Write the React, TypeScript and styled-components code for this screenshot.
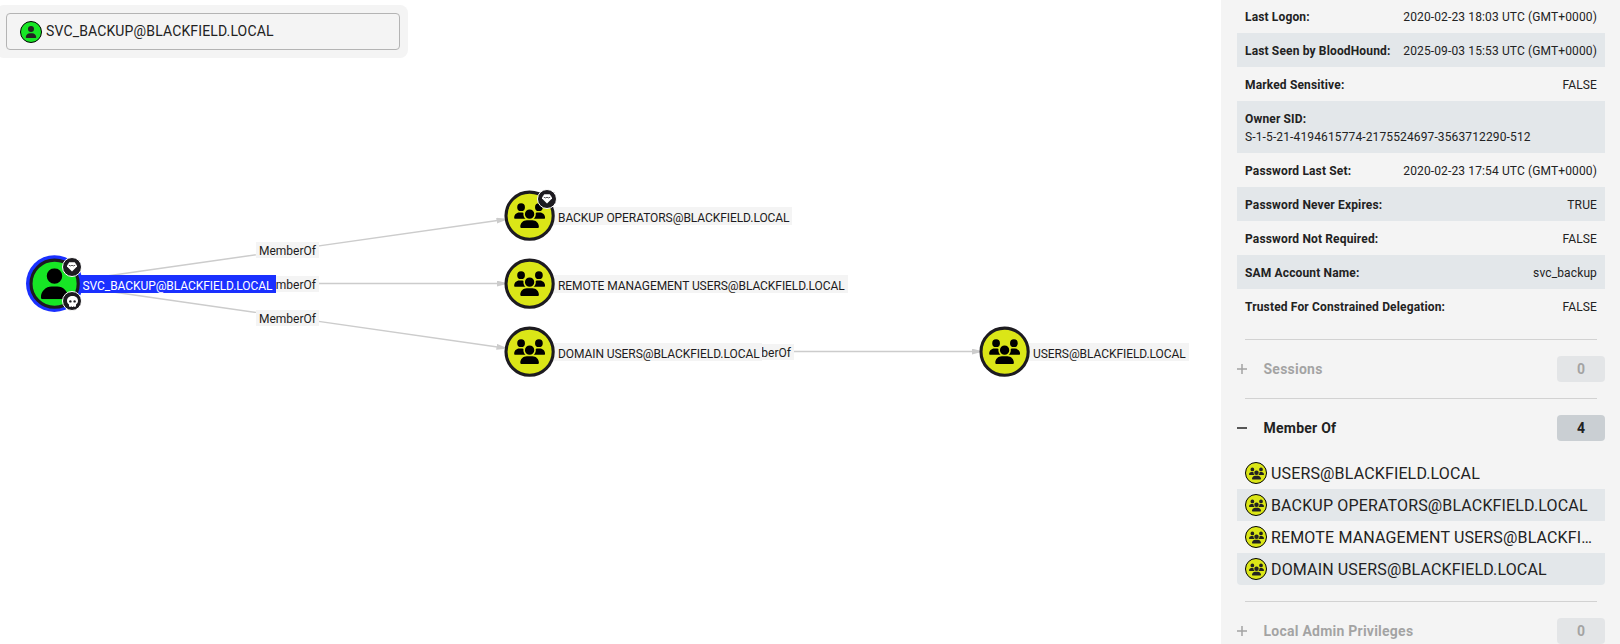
import React from "react";
import styled, { createGlobalStyle } from "styled-components";
import { FaUser, FaUsers } from "react-icons/fa6";

const GlobalStyle = createGlobalStyle`
  * { box-sizing: border-box; }
  body { margin: 0; background: #fff; color: #1d1b20; font-family: Roboto, sans-serif; overflow: hidden; }
`;

const Page = styled.div`
  display: flex;
  width: 1620px;
  height: 644px;
  overflow: hidden;
`;

const Canvas = styled.main`
  position: relative;
  flex: 1;
  min-width: 0;
`;

const Edges = styled.svg`
  position: absolute;
  inset: 0;
`;

const SearchCard = styled.div`
  position: absolute;
  top: 5px;
  left: -4px;
  width: 412px;
  height: 53px;
  padding: 8px 8px 8px 10px;
  border-radius: 8px;
  background: #f4f4f4;
`;

const SearchResult = styled.div`
  display: flex;
  align-items: center;
  gap: 4px;
  height: 37px;
  padding-left: 13px;
  border: 1px solid #b4b4b4;
  border-radius: 4px;
  color: #222;
  font-size: 14px;
  letter-spacing: 0.01em;
`;

const SearchText = styled.span`
  padding-bottom: 2px;
`;

const Glyph = styled.span<{ $fill: string }>`
  display: inline-flex;
  flex: none;
  align-items: center;
  justify-content: center;
  width: 22px;
  height: 22px;
  border: 1px solid #000;
  border-radius: 50%;
  background: ${(p) => p.$fill};
`;

const EdgeLabel = styled.span`
  position: absolute;
  height: 16px;
  padding: 0 3px;
  background: #f4f4f4;
  font-size: 12px;
  line-height: 18px;
  white-space: nowrap;
`;

const NodeLabel = styled.span<{ $selected?: boolean }>`
  position: absolute;
  height: 18px;
  padding: 0 3px 0 7px;
  background: ${(p) => (p.$selected ? "#1a30ff" : "#f4f4f4")};
  color: ${(p) => (p.$selected ? "#fff" : "#1d1b20")};
  font-size: 12px;
  letter-spacing: -0.07px;
  line-height: 22px;
  white-space: nowrap;
`;

const NodeDisc = styled.svg`
  position: absolute;
  width: 60px;
  height: 60px;
  color: #000;
`;

const Badge = styled.span`
  position: absolute;
  display: flex;
  align-items: center;
  justify-content: center;
  width: 20px;
  height: 20px;
  border: 1px solid #fff;
  border-radius: 50%;
  background: #1d1b20;
  color: #fff;
`;

const Panel = styled.aside`
  flex: none;
  width: 399px;
  padding: 0 15px 0 16px;
  background: #f4f4f4;
  color: #222;
`;

const Properties = styled.dl`
  margin: -1px 0 0;
`;

const Property = styled.div<{ $stacked?: boolean }>`
  display: flex;
  flex-direction: ${(p) => (p.$stacked ? "column" : "row")};
  justify-content: space-between;
  padding: 9px 8px 7px;
  font-size: 12px;
  letter-spacing: 0.01071em;
  line-height: 18px;
  white-space: nowrap;
  &:nth-child(even) { background: #e3e7ea; }
  dt { font-weight: 700; letter-spacing: 0.0125em; }
  dd { margin: 0; }
`;

const Divider = styled.hr`
  height: 1px;
  margin: 16px 8px;
  border: 0;
  background: #d2d2d2;
`;

const Section = styled.div<{ $disabled?: boolean }>`
  display: flex;
  align-items: center;
  height: 26px;
  color: #222;
  font-size: 14px;
  font-weight: 700;
  opacity: ${(p) => (p.$disabled ? 0.38 : 1)};
`;

const SectionTitle = styled.span`
  flex: 1;
  margin-left: 16.5px;
  letter-spacing: 0.24px;
`;

const Count = styled.span`
  width: 48px;
  height: 26px;
  border-radius: 4px;
  background: #cacfd3;
  line-height: 26px;
  text-align: center;
`;

const Members = styled.ul`
  margin: 16px 0 0;
  padding: 0;
  list-style: none;
  border-radius: 0 0 4px 4px;
  overflow: hidden;
`;

const Member = styled.li`
  display: flex;
  align-items: center;
  gap: 4px;
  height: 32px;
  padding: 0 8px;
  font-size: 16px;
  letter-spacing: 0.00938em;
  &:nth-child(even) { background: #e3e7ea; }
`;

const MemberName = styled.span`
  overflow: hidden;
  text-overflow: ellipsis;
  white-space: nowrap;
`;

const GREEN = "#17e625";
const YELLOW = "#dbe617";

const nodes = [
  { x: 529, y: 215, name: "BACKUP OPERATORS@BLACKFIELD.LOCAL", width: 241, gem: true },
  { x: 529, y: 283, name: "REMOTE MANAGEMENT USERS@BLACKFIELD.LOCAL", width: 297 },
  { x: 529, y: 351, name: "DOMAIN USERS@BLACKFIELD.LOCAL", width: 211 },
  { x: 1004, y: 351, name: "USERS@BLACKFIELD.LOCAL", width: 163 },
];

const edges = [
  [54, 283.5, 504.5, 219.5],
  [54, 283.5, 504.5, 283.5],
  [54, 283.5, 504.5, 348],
  [529, 351.5, 979.5, 351.5],
];

const edgeLabels = [
  [256, 242],
  [256, 276],
  [256, 310],
  [731, 344],
];

const properties = [
  ["Last Logon:", "2020-02-23 18:03 UTC (GMT+0000)"],
  ["Last Seen by BloodHound:", "2025-09-03 15:53 UTC (GMT+0000)"],
  ["Marked Sensitive:", "FALSE"],
  ["Owner SID:", "S-1-5-21-4194615774-2175524697-3563712290-512"],
  ["Password Last Set:", "2020-02-23 17:54 UTC (GMT+0000)"],
  ["Password Never Expires:", "TRUE"],
  ["Password Not Required:", "FALSE"],
  ["SAM Account Name:", "svc_backup"],
  ["Trusted For Constrained Delegation:", "FALSE"],
];

const members = [
  "USERS@BLACKFIELD.LOCAL",
  "BACKUP OPERATORS@BLACKFIELD.LOCAL",
  "REMOTE MANAGEMENT USERS@BLACKFIELD.LOCAL",
  "DOMAIN USERS@BLACKFIELD.LOCAL",
];

function Disc({ x, y, fill, selected, children }: { x: number; y: number; fill: string; selected?: boolean; children: React.ReactNode }) {
  return (
    <NodeDisc viewBox="0 0 60 60" style={{ left: x - 30, top: y - 30 }}>
      {selected && <circle cx="30.4" cy="30.6" r="28.4" fill="#1a30ff" />}
      <circle cx="30.6" cy="30.7" r="23.6" fill={fill} stroke="#1d1b20" strokeWidth="3.1" />
      {children}
    </NodeDisc>
  );
}

function Gem() {
  return (
    <svg width="10" height="10" viewBox="0 0 10 10">
      <path d="M2.3 0.3h5.4L10 3.4V4.4L5 9.6 0 4.4v-1z" fill="#fff" />
      <path d="M1.8 3.2L3.4 3.9 5 3.3 6.6 3.9 8.2 3.2" fill="none" stroke="#1d1b20" strokeWidth="0.75" />
    </svg>
  );
}

function Skull() {
  return (
    <svg width="11" height="11" viewBox="0 0 11 11">
      <path
        d="M5.5 0C2.4 0 0 2 0 4.7c0 1.6.8 2.9 2 3.7v1.4c0 .7.4 1.2 1 1.2h.8V9.9h.7V11h2V9.9h.7V11H8c.6 0 1-.5 1-1.2V8.4c1.2-.8 2-2.1 2-3.7C11 2 8.6 0 5.5 0z"
        fill="#fff"
      />
      <circle cx="3.4" cy="5.4" r="1.2" fill="#1d1b20" />
      <circle cx="7.6" cy="5.4" r="1.2" fill="#1d1b20" />
    </svg>
  );
}

function Toggle({ open }: { open?: boolean }) {
  return (
    <svg width="10" height="10" viewBox="0 0 10 10" stroke="#222" strokeWidth="1.5">
      <path d={open ? "M0 5h10" : "M0 5h10M5 0v10"} />
    </svg>
  );
}

function SectionHeader({ title, count, open }: { title: string; count: number; open?: boolean }) {
  return (
    <Section $disabled={!open}>
      <Toggle open={open} />
      <SectionTitle>{title}</SectionTitle>
      <Count>{count}</Count>
    </Section>
  );
}

export default function App() {
  return (
    <Page>
      <GlobalStyle />
      <Canvas>
        <Edges width="1221" height="644">
          <defs>
            <marker id="arrow" markerUnits="userSpaceOnUse" markerWidth="8" markerHeight="6" refX="8" refY="3" orient="auto">
              <path d="M0 0L8 2V4L0 6z" fill="#ccc" />
            </marker>
          </defs>
          {edges.map(([x1, y1, x2, y2]) => (
            <line key={`${x1}-${y2}`} x1={x1} y1={y1} x2={x2} y2={y2} stroke="#ccc" strokeWidth="1.4" markerEnd="url(#arrow)" />
          ))}
        </Edges>
        {edgeLabels.map(([x, y]) => (
          <EdgeLabel key={`${x}-${y}`} style={{ left: x, top: y }}>MemberOf</EdgeLabel>
        ))}
        {nodes.map((n) => (
          <React.Fragment key={n.name}>
            <NodeLabel style={{ left: n.x + 22, top: n.y - 8, width: n.width }}>{n.name}</NodeLabel>
            <Disc x={n.x} y={n.y} fill={YELLOW}><FaUsers x={15.1} y={15.2} size={31} /></Disc>
            {n.gem && <Badge style={{ left: n.x + 8, top: n.y - 26 }}><Gem /></Badge>}
          </React.Fragment>
        ))}
        <NodeLabel $selected style={{ left: 75.5, top: 275, width: 200 }}>SVC_BACKUP@BLACKFIELD.LOCAL</NodeLabel>
        <Disc x={54} y={283} fill={GREEN} selected><FaUser x={15} y={15.2} size={31} /></Disc>
        <Badge style={{ left: 62, top: 257 }}><Gem /></Badge>
        <Badge style={{ left: 62, top: 291 }}><Skull /></Badge>
        <SearchCard>
          <SearchResult>
            <Glyph $fill={GREEN}><FaUser size={12} /></Glyph>
            <SearchText>SVC_BACKUP@BLACKFIELD.LOCAL</SearchText>
          </SearchResult>
        </SearchCard>
      </Canvas>
      <Panel>
        <Properties>
          {properties.map(([label, value]) => (
            <Property key={label} $stacked={label === "Owner SID:"}>
              <dt>{label}</dt>
              <dd>{value}</dd>
            </Property>
          ))}
        </Properties>
        <Divider />
        <SectionHeader title="Sessions" count={0} />
        <Divider />
        <SectionHeader title="Member Of" count={4} open />
        <Members>
          {members.map((m) => (
            <Member key={m}>
              <Glyph $fill={YELLOW}><FaUsers size={15} /></Glyph>
              <MemberName>{m}</MemberName>
            </Member>
          ))}
        </Members>
        <Divider />
        <SectionHeader title="Local Admin Privileges" count={0} />
      </Panel>
    </Page>
  );
}
